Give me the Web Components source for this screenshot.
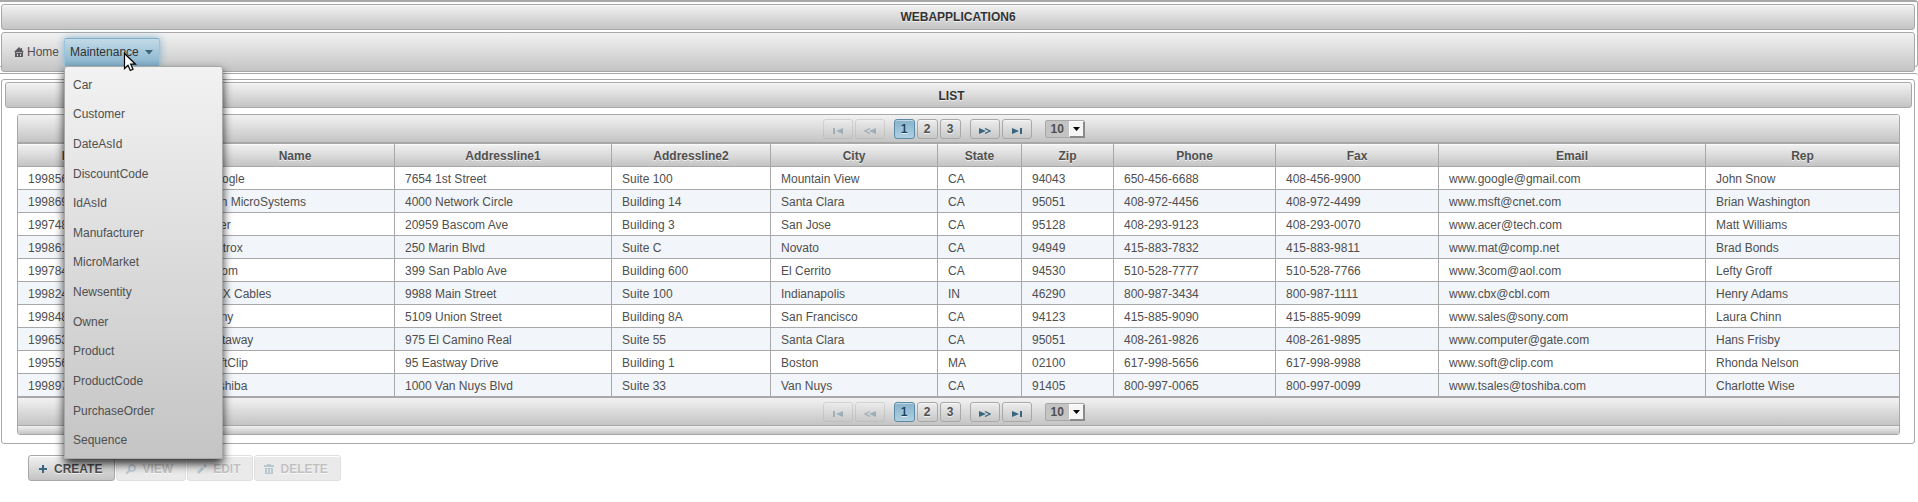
<!DOCTYPE html>
<html lang="en">
<head>
<meta charset="utf-8">
<title>WebApplication6</title>
<style>
html, body { margin: 0; background: #fff; }
body {
  font: 12px/14px "Liberation Sans", Arial, sans-serif;
  color: #4f4f4f;
  --line: #a8a8a8;
  --metal: linear-gradient(#f2f2f2, #c4c4c4);
  --ink: #4f4f4f;
}
</style>
</head>
<body>
<app-shell>
  <title-bar slot="north">WEBAPPLICATION6</title-bar>
  <menu-bar slot="north"></menu-bar>
  <list-panel>
    <title-bar class="list">LIST</title-bar>
    <customer-table></customer-table>
  </list-panel>
  <action-bar>
    <action-button icon="plus">CREATE</action-button>
    <action-button icon="search" disabled>VIEW</action-button>
    <action-button icon="pencil" disabled>EDIT</action-button>
    <action-button icon="trash" disabled>DELETE</action-button>
  </action-bar>
</app-shell>
<script>
function define(name, html, setup) {
  customElements.define(name, class extends HTMLElement {
    constructor() {
      super();
      this.attachShadow({ mode: 'open' }).innerHTML = '<style>*{box-sizing:border-box}</style>' + html;
    }
    connectedCallback() { if (setup) setup(this, this.shadowRoot); }
  });
}

define('app-shell', `<style>
  :host { display: block; }
  header { height: 67px; padding: 2px 2px 0 1px; border: 1px solid var(--line); border-top-width: 2px; border-left: 0; border-radius: 0 3px 3px 0; display: flex; flex-direction: column; gap: 2px; }
  main { margin-top: 6px; padding: 5px 3px 0 1px; border-top: 1px solid var(--line); border-radius: 0 3px 0 0; }
  </style><header><slot name="north"></slot></header><main><slot></slot></main>`);

define('title-bar', `<style>
  :host { display: block; flex: none; box-sizing: border-box; padding: 5px; border: 1px solid var(--line); border-radius: 3px; background: var(--metal); box-shadow: inset 0 1px 0 #f8f8f8; }
  :host(.list) { padding: 6px 18px 4px 4px; }
  h1 { margin: 0; font-size: 12px; line-height: 14px; font-weight: bold; text-align: center; color: #333; text-shadow: 0 1px 0 rgba(255,255,255,.7); }
  </style><h1><slot></slot></h1>`);

define('menu-bar', `<style>
  :host { display: block; flex: none; position: relative; z-index: 5; box-sizing: border-box; padding: 5px 12px; border: 1px solid var(--line); border-radius: 3px; background: var(--metal); }
  nav { display: flex; align-items: center; gap: 5px; }
  a, button { font: inherit; color: var(--ink); text-decoration: none; }
  .home { display: flex; align-items: center; gap: 3px; }
  .drop { position: relative; }
  button { display: flex; align-items: center; gap: 6px; height: 28px; width: 96px; margin: 0; padding: 0 5px; border: 1px solid #7eb0cc; border-left-color: #9cc4da; border-right-color: #9cc4da; border-radius: 2px; background: linear-gradient(#c4dbe8, #85b2cb); color: #313131; box-shadow: 0 0 8px #85b2cb; }
  ul { position: absolute; left: 0; top: 28px; width: 159px; height: 393px; margin: 0; padding: 3px 2px; list-style: none; display: flex; flex-direction: column; border: 1px solid var(--line); border-radius: 3px; background: var(--metal); box-shadow: 0 5px 10px rgba(0,0,0,.8); }
  li { flex: 1; display: flex; align-items: center; padding-left: 6px; }
  .cursor { position: absolute; left: 59px; top: 14px; }
  </style>
  <nav><a class="home" href="#home"><svg width="10" height="10" viewBox="0 0 10 10" fill="#5a5a60"><path d="M5 0 10 5H0zM7 1h1v2H7z"/><path fill-rule="evenodd" d="M1 5h8v5H1zM2 5v1h6V5zM3 7v2h1V7zm3 0v2h1V7z"/><path d="M2 5h6v1H2z" fill="#aaa"/></svg>Home</a>
  <div class="drop"><button aria-haspopup="true" aria-expanded="true">Maintenance<svg width="8" height="5" viewBox="0 0 8 5"><path fill="#38667f" d="M0 0h8L4 4.500z"/></svg></button>
  <ul></ul>
  <svg class="cursor" width="14" height="21" viewBox="0 0 14 21"><path d="M1.500 1.500v15l3.500-3.300 2.300 5.300 2.700-1.200-2.300-5.100h4.800z" fill="#fff" stroke="#000" stroke-width="1.200"/></svg></div></nav>`,
  (el, root) => {
    root.querySelector('ul').innerHTML = 'Car Customer DateAsId DiscountCode IdAsId Manufacturer MicroMarket Newsentity Owner Product ProductCode PurchaseOrder Sequence'
      .split(' ').map(n => `<li><a href="#${n}">${n}</a></li>`).join('');
  });

define('list-panel', `<style>
  :host { display: block; padding: 2px 2px 8px 3px; border: 1px solid var(--line); border-radius: 3px; }
  ::slotted(customer-table) { margin: 6px 12px 0; }
  </style><slot></slot>`);

define('page-nav', `<style>
  :host { display: flex; justify-content: center; align-items: center; padding: 4px 10px 3px 0; }
  .group { display: flex; gap: 2px; margin-right: 9px; }
  button { font: bold 12px/14px "Liberation Sans", Arial, sans-serif; color: var(--ink); margin: 0; padding: 0; width: 21px; height: 20px; display: flex; align-items: center; justify-content: center; border: 1px solid var(--line); border-radius: 3px; background: linear-gradient(#ededed, #c8c8c8); box-shadow: inset 0 1px 0 rgba(255,255,255,.5); text-shadow: 0 1px 0 rgba(255,255,255,.7); }
  .arrow { width: 30px; padding-top: 3px; }
  .arrow:disabled { opacity: .35; }
  .on { border-color: #5b8aa5; background: linear-gradient(#85b2cb, #afd0e2); color: #1c4257; }
  svg { fill: #38667f; stroke: #38667f; }
  .size { display: flex; position: relative; margin-left: 4px; }
  select { appearance: none; font: bold 12px/14px "Liberation Sans", Arial, sans-serif; color: var(--ink); width: 40px; height: 18px; margin: 0; padding: 0 0 0 5px; border: 1px solid var(--line); border-radius: 2px; background: #c4c4c4; }
  .size i { position: absolute; right: 0; top: 1px; width: 16px; height: 17px; background: #f6f6f6; border: solid #fff; border-width: 1px 2px 2px 1px; border-right-color: #8a8a8a; border-bottom-color: #8a8a8a; pointer-events: none; display: flex; align-items: center; justify-content: center; }
  .size path { fill: #000; stroke: none; }
  </style>
  <div class="group">
    <button class="arrow" disabled aria-label="First"><svg width="10" height="6" viewBox="0 0 10 6"><path stroke="none" d="M0 0h2v6H0zM10 0v6L3 3z"/></svg></button>
    <button class="arrow" disabled aria-label="Previous"><svg width="12" height="6" viewBox="0 0 12 6"><path stroke="none" d="M12 0v6L5 3z"/><path fill="none" stroke-width="1.300" d="M6 .500 1 3l5 2.500"/></svg></button>
  </div>
  <div class="group"><button class="on">1</button><button>2</button><button>3</button></div>
  <div class="group">
    <button class="arrow" aria-label="Next"><svg width="12" height="6" viewBox="0 0 12 6"><path stroke="none" d="M0 0v6l7-3z"/><path fill="none" stroke-width="1.300" d="M6 .500 11 3 6 5.500"/></svg></button>
    <button class="arrow" aria-label="Last"><svg width="10" height="6" viewBox="0 0 10 6"><path stroke="none" d="M8 0h2v6H8zM0 0v6l7-3z"/></svg></button>
  </div>
  <div class="size"><select aria-label="Rows per page"><option>10</option><option>20</option></select><i><svg width="7" height="4" viewBox="0 0 7 4"><path d="M0 0h7L3.500 4z"/></svg></i></div>`);

define('customer-table', `<style>
  :host { display: block; border: 1px solid var(--line); border-radius: 3px; overflow: hidden; }
  page-nav { background: var(--metal); }
  table { width: 100%; table-layout: fixed; border-collapse: separate; border-spacing: 0; border: solid var(--line); border-width: 2px 0; }
  th, td { height: 23px; padding: 2px 10px 0; border-bottom: 1px solid var(--line); border-right: 1px solid var(--line); line-height: 14px; white-space: nowrap; }
  th { background: var(--metal); box-shadow: inset 0 1px 0 #fafafa; text-shadow: 0 1px 0 rgba(255,255,255,.7); }
  th:last-child, td:last-child { border-right: 0; }
  tr:last-child td { height: 22px; border-bottom: 0; }
  tr:nth-child(even) td { background: #f2f5f9; }
  footer { height: 9px; border-top: 1px solid var(--line); background: var(--metal); }
  </style>
  <page-nav></page-nav><table><colgroup></colgroup><thead></thead><tbody></tbody></table><page-nav></page-nav><footer></footer>`,
  (el, root) => {
    const cols = [['Id', 99], ['Code', 79], ['Name', 199], ['Addressline1', 217], ['Addressline2', 159], ['City', 167], ['State', 84], ['Zip', 92], ['Phone', 162], ['Fax', 163], ['Email', 267], ['Rep', 193]];
    const rows = `199856||Google|7654 1st Street|Suite 100|Mountain View|CA|94043|650-456-6688|408-456-9900|www.google@gmail.com|John Snow
199869||Sun MicroSystems|4000 Network Circle|Building 14|Santa Clara|CA|95051|408-972-4456|408-972-4499|www.msft@cnet.com|Brian Washington
199748||Acer|20959 Bascom Ave|Building 3|San Jose|CA|95128|408-293-9123|408-293-0070|www.acer@tech.com|Matt Williams
199861||Matrox|250 Marin Blvd|Suite C|Novato|CA|94949|415-883-7832|415-883-9811|www.mat@comp.net|Brad Bonds
199784||3Com|399 San Pablo Ave|Building 600|El Cerrito|CA|94530|510-528-7777|510-528-7766|www.3com@aol.com|Lefty Groff
199824||CBX Cables|9988 Main Street|Suite 100|Indianapolis|IN|46290|800-987-3434|800-987-1111|www.cbx@cbl.com|Henry Adams
199848||Sony|5109 Union Street|Building 8A|San Francisco|CA|94123|415-885-9090|415-885-9099|www.sales@sony.com|Laura Chinn
199653||Getaway|975 El Camino Real|Suite 55|Santa Clara|CA|95051|408-261-9826|408-261-9895|www.computer@gate.com|Hans Frisby
199556||SoftClip|95 Eastway Drive|Building 1|Boston|MA|02100|617-998-5656|617-998-9988|www.soft@clip.com|Rhonda Nelson
199897||Toshiba|1000 Van Nuys Blvd|Suite 33|Van Nuys|CA|91405|800-997-0065|800-997-0099|www.tsales@toshiba.com|Charlotte Wise`.split('\n');
    root.querySelector('colgroup').innerHTML = cols.map(c => `<col style="width:${c[1]}px">`).join('');
    root.querySelector('thead').innerHTML = '<tr>' + cols.map(c => `<th scope="col">${c[0]}</th>`).join('') + '</tr>';
    root.querySelector('tbody').innerHTML = rows.map(r => '<tr>' + r.split('|').map(c => `<td>${c}</td>`).join('') + '</tr>').join('');
  });

define('action-bar', `<style>
  :host { display: flex; gap: 1px; padding: 11px 27px; }
  </style><slot></slot>`);

const icons = {
  plus: '<path d="M4 1h2v3h3v2H6v3H4V6H1V4h3z" fill="#38667f"/>',
  search: '<circle cx="6" cy="4" r="3" fill="none" stroke="#38667f" stroke-width="1.500"/><path d="M4 6 0 10" stroke="#38667f" stroke-width="2"/>',
  pencil: '<path d="M1 9 6 4" stroke="#38667f" stroke-width="2.500"/><path d="M7 3 9 1" stroke="#38667f" stroke-width="2.500"/>',
  trash: '<path fill="#38667f" fill-rule="evenodd" d="M3 0h4v1h3v2H0V1h3zM1 4h8v6H1zM3 5v4h1V5zm3 0v4h1V5z"/>'
};
define('action-button', `<style>
  :host { display: block; }
  button { display: flex; align-items: center; gap: 6px; height: 26px; margin: 0; padding: 2px 12px 0 9px; border: 1px solid var(--line); border-radius: 3px; background: var(--metal); box-shadow: inset 0 1px 0 #fff; font: bold 12px/14px "Liberation Sans", Arial, sans-serif; color: var(--ink); text-shadow: 0 1px 0 rgba(255,255,255,.7); }
  button:disabled { opacity: .35; background: #c4c4c4; }
  </style><button type="button"><svg width="10" height="10" viewBox="0 0 10 10"></svg><span><slot></slot></span></button>`,
  (el, root) => {
    root.querySelector('svg').innerHTML = icons[el.getAttribute('icon')];
    root.querySelector('button').disabled = el.hasAttribute('disabled');
  });
</script>
</body>
</html>
